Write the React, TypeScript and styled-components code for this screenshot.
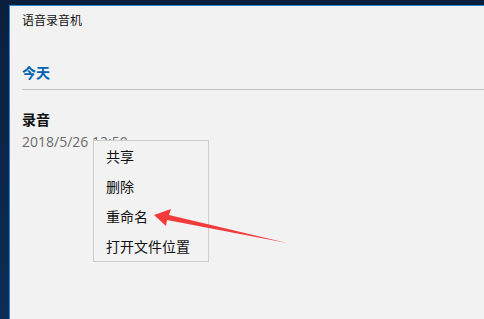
import styled, { createGlobalStyle } from "styled-components";

const GlobalStyle = createGlobalStyle`
  html, body {
    margin: 0;
    padding: 0;
    height: 100%;
    overflow: hidden;
  }
  body {
    background: linear-gradient(180deg, #0a1f3c 0%, #0c2d55 100%);
    font-family: "Noto Sans CJK SC", "Noto Sans", sans-serif;
  }
  #root {
    height: 100%;
  }
`;

const Desktop = styled.div`
  height: 100%;
  box-sizing: border-box;
  padding: 5px 0 0 9px;
  display: flex;
`;

const Window = styled.div`
  position: relative;
  flex: 1;
  background: #f2f2f2;
  border-top: 1px solid #2b88d8;
  border-left: 1px solid #2b88d8;
  padding: 6px 0 0 12px;
  display: flex;
  flex-direction: column;
`;

const Title = styled.div`
  font-size: 12px;
  line-height: 16px;
  color: #111;
`;

const Section = styled.div`
  margin-top: 34px;
  font-size: 14px;
  line-height: 20px;
  font-weight: 700;
  color: #0063b1;
  padding-bottom: 7px;
  border-bottom: 1px solid #c4c4c4;
`;

const Recording = styled.div`
  margin-top: 19px;
  display: flex;
  flex-direction: column;
  gap: 3px;
`;

const RecName = styled.div`
  font-size: 14px;
  line-height: 20px;
  font-weight: 700;
  color: #111;
`;

const RecDate = styled.div`
  font-size: 14px;
  line-height: 20px;
  color: #6b6b6b;
  font-family: "Open Sans", "Noto Sans CJK SC", sans-serif;
`;

const Menu = styled.ul`
  position: absolute;
  left: 83px;
  top: 134px;
  width: 114px;
  margin: 0;
  padding: 0;
  list-style: none;
  background: #f2f2f2;
  border: 1px solid #cccccc;
`;

const MenuItem = styled.li`
  height: 30px;
  line-height: 30px;
  padding-left: 12px;
  font-size: 14px;
  color: #111;
`;

const Arrow = styled.svg`
  position: absolute;
  left: 0;
  top: 0;
  width: 484px;
  height: 319px;
  pointer-events: none;
`;

const items = ["共享", "删除", "重命名", "打开文件位置"];

export default function App() {
  return (
    <>
      <GlobalStyle />
      <Desktop>
        <Window>
          <Title>语音录音机</Title>
          <Section>今天</Section>
          <Recording>
            <RecName>录音</RecName>
            <RecDate>2018/5/26 12:50</RecDate>
          </Recording>
          <Menu>
            {items.map((t) => (
              <MenuItem key={t}>{t}</MenuItem>
            ))}
          </Menu>
        </Window>
      </Desktop>
      <Arrow viewBox="0 0 484 319">
        <polygon
          points="154,215 171,209 169,215 287,243 167,220 166,226"
          fill="#f23c3c"
        />
      </Arrow>
    </>
  );
}
